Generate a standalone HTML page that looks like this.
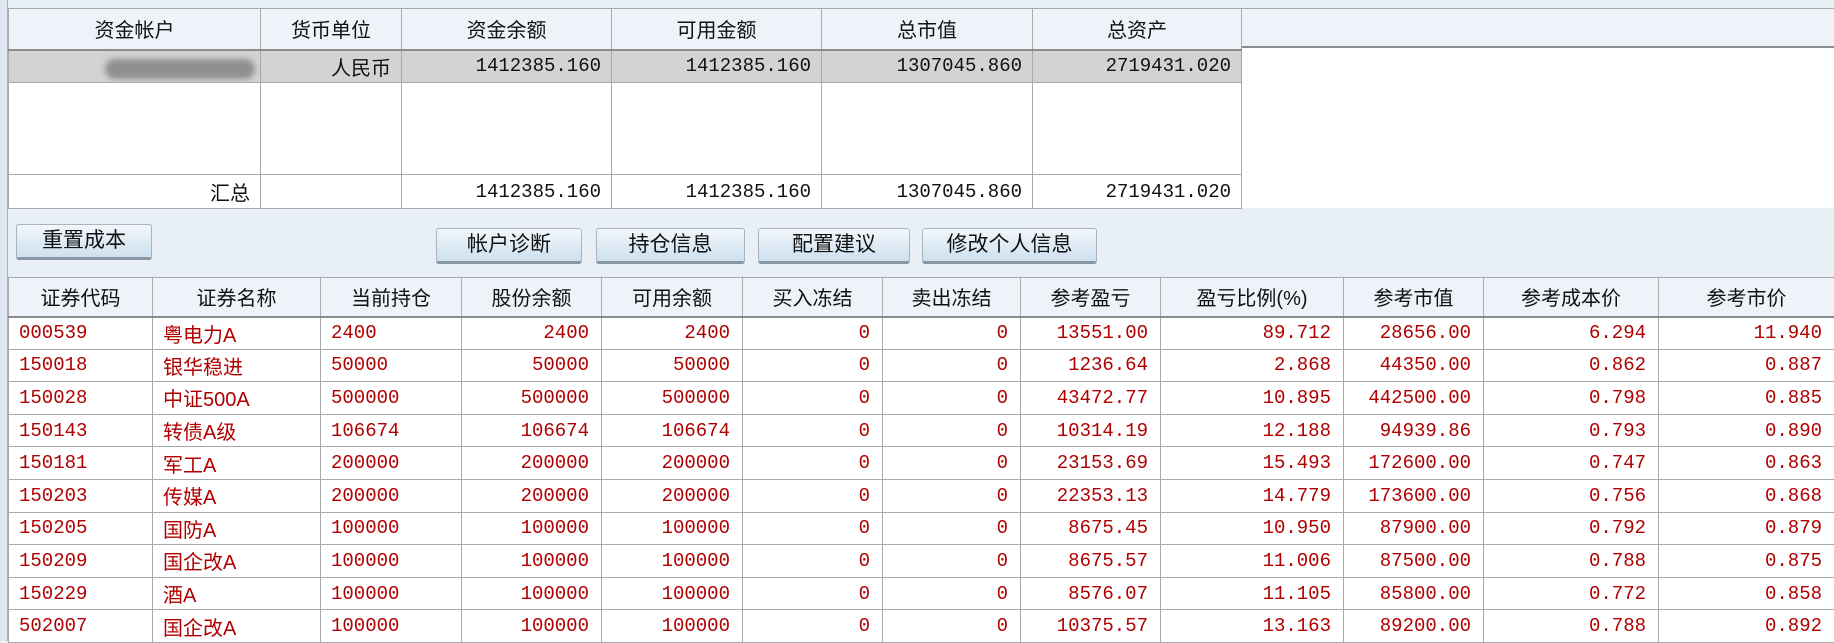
<!DOCTYPE html>
<html><head><meta charset="utf-8"><style>
*{margin:0;padding:0;box-sizing:border-box}
body{width:1834px;height:641px;overflow:hidden;background:#e9eff6;position:relative;font-family:"Liberation Mono","Noto Sans CJK SC",monospace;}
.cjk{font-family:"Liberation Sans","Noto Sans CJK SC",sans-serif;font-size:20px!important}
table{border-collapse:collapse;table-layout:fixed;position:absolute}
td,th{border:1px solid #a9a9a9;white-space:nowrap;overflow:hidden}
th{font-weight:normal;font-family:"Liberation Sans","Noto Sans CJK SC",sans-serif;font-size:20px;color:#111;background:#eef3f9;border-bottom:2px solid #8c8c8c}
#t1{left:8px;top:8px;width:1233px}
#t1 td{font-size:19px;text-align:right;padding-right:10px;color:#111}
#t2{left:8px;top:277px;width:1826px}
#t2 td{font-size:19px;color:#b00000;text-align:right;padding-right:12px;height:32.6px;background:#fff}
#t2 td.l{text-align:left;padding-left:10px}
.btn{position:absolute;height:36px;background:linear-gradient(#f3f7fb,#dbe9f4 60%,#cfe0ee);border:1px solid #a8b4c0;border-bottom:3px solid #8a96a2;border-radius:3px;font-size:21px;font-family:"Liberation Sans","Noto Sans CJK SC",sans-serif;text-align:center;line-height:32px;color:#111}
</style></head><body>
<div style="position:absolute;left:0;top:0;width:8px;height:641px;background:#dfe8f2;border-right:1px solid #9fb3c8"></div>
<div style="position:absolute;left:1241px;top:8px;width:593px;height:40px;background:#eef3f9;border-bottom:2px solid #8c8c8c;border-top:1px solid #a9a9a9"></div>
<div style="position:absolute;left:1241px;top:48px;width:593px;height:160px;background:#fff"></div>
<table id="t1">
<colgroup><col style="width:252px"><col style="width:141px"><col style="width:210px"><col style="width:210px"><col style="width:211px"><col style="width:209px"></colgroup>
<tr style="height:41px"><th>资金帐户</th><th>货币单位</th><th>资金余额</th><th>可用金额</th><th>总市值</th><th>总资产</th></tr>
<tr style="height:33px;background:#d3d3d3"><td style="position:relative"><div style="position:absolute;left:96px;top:8px;width:150px;height:20px;border-radius:10px;background:#8f8f8f;filter:blur(3px)"></div></td><td class="cjk">人民币</td><td>1412385.160</td><td>1412385.160</td><td>1307045.860</td><td>2719431.020</td></tr>
<tr style="height:92px;background:#fff"><td></td><td></td><td></td><td></td><td></td><td></td></tr>
<tr style="height:34px;background:#fff"><td class="cjk">汇总</td><td></td><td>1412385.160</td><td>1412385.160</td><td>1307045.860</td><td>2719431.020</td></tr>
</table>
<div class="btn" style="left:16px;top:224px;width:136px">重置成本</div>
<div class="btn" style="left:436px;top:228px;width:146px">帐户诊断</div>
<div class="btn" style="left:596px;top:228px;width:149px">持仓信息</div>
<div class="btn" style="left:758px;top:228px;width:152px">配置建议</div>
<div class="btn" style="left:922px;top:228px;width:175px">修改个人信息</div>
<table id="t2">
<colgroup><col style="width:144px"><col style="width:168px"><col style="width:141px"><col style="width:140px"><col style="width:141px"><col style="width:140px"><col style="width:138px"><col style="width:140px"><col style="width:183px"><col style="width:140px"><col style="width:175px"><col style="width:176px"></colgroup>
<tr style="height:39px"><th>证券代码</th><th>证券名称</th><th>当前持仓</th><th>股份余额</th><th>可用余额</th><th>买入冻结</th><th>卖出冻结</th><th>参考盈亏</th><th>盈亏比例(%)</th><th>参考市值</th><th>参考成本价</th><th>参考市价</th></tr>
<tr><td class="l">000539</td><td class="l cjk">粤电力A</td><td class="l">2400</td><td>2400</td><td>2400</td><td>0</td><td>0</td><td>13551.00</td><td>89.712</td><td>28656.00</td><td>6.294</td><td>11.940</td></tr>
<tr><td class="l">150018</td><td class="l cjk">银华稳进</td><td class="l">50000</td><td>50000</td><td>50000</td><td>0</td><td>0</td><td>1236.64</td><td>2.868</td><td>44350.00</td><td>0.862</td><td>0.887</td></tr>
<tr><td class="l">150028</td><td class="l cjk">中证500A</td><td class="l">500000</td><td>500000</td><td>500000</td><td>0</td><td>0</td><td>43472.77</td><td>10.895</td><td>442500.00</td><td>0.798</td><td>0.885</td></tr>
<tr><td class="l">150143</td><td class="l cjk">转债A级</td><td class="l">106674</td><td>106674</td><td>106674</td><td>0</td><td>0</td><td>10314.19</td><td>12.188</td><td>94939.86</td><td>0.793</td><td>0.890</td></tr>
<tr><td class="l">150181</td><td class="l cjk">军工A</td><td class="l">200000</td><td>200000</td><td>200000</td><td>0</td><td>0</td><td>23153.69</td><td>15.493</td><td>172600.00</td><td>0.747</td><td>0.863</td></tr>
<tr><td class="l">150203</td><td class="l cjk">传媒A</td><td class="l">200000</td><td>200000</td><td>200000</td><td>0</td><td>0</td><td>22353.13</td><td>14.779</td><td>173600.00</td><td>0.756</td><td>0.868</td></tr>
<tr><td class="l">150205</td><td class="l cjk">国防A</td><td class="l">100000</td><td>100000</td><td>100000</td><td>0</td><td>0</td><td>8675.45</td><td>10.950</td><td>87900.00</td><td>0.792</td><td>0.879</td></tr>
<tr><td class="l">150209</td><td class="l cjk">国企改A</td><td class="l">100000</td><td>100000</td><td>100000</td><td>0</td><td>0</td><td>8675.57</td><td>11.006</td><td>87500.00</td><td>0.788</td><td>0.875</td></tr>
<tr><td class="l">150229</td><td class="l cjk">酒A</td><td class="l">100000</td><td>100000</td><td>100000</td><td>0</td><td>0</td><td>8576.07</td><td>11.105</td><td>85800.00</td><td>0.772</td><td>0.858</td></tr>
<tr><td class="l">502007</td><td class="l cjk">国企改A</td><td class="l">100000</td><td>100000</td><td>100000</td><td>0</td><td>0</td><td>10375.57</td><td>13.163</td><td>89200.00</td><td>0.788</td><td>0.892</td></tr>
</table>
</body></html>
